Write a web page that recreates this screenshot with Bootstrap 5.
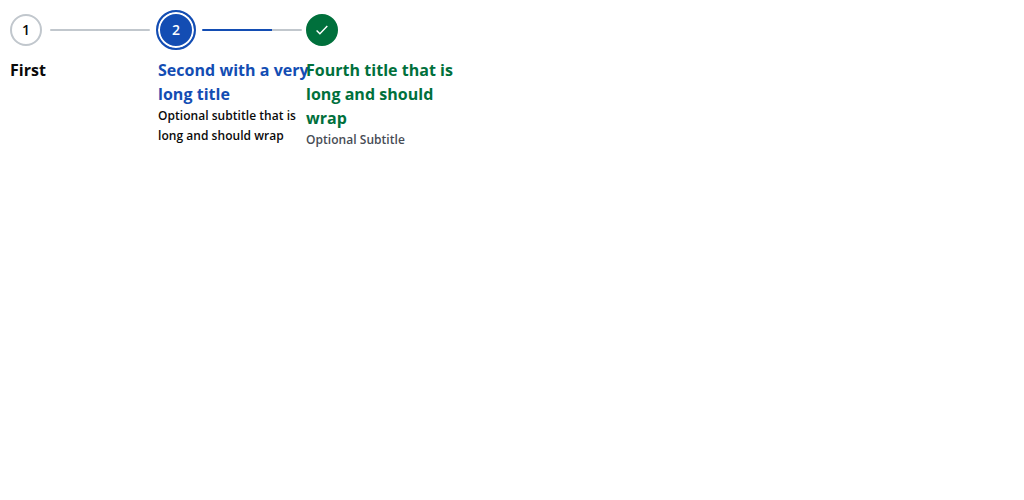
<!DOCTYPE html>
<html lang="en">
<head>
<meta charset="utf-8">
<title>Stepper</title>
<link href="https://cdn.jsdelivr.net/npm/bootstrap@5.3.0/dist/css/bootstrap.min.css" rel="stylesheet">
<style>
body{font-family:"Open Sans",sans-serif;color:#0a0a0a;background:#fff}
.stepper{padding:10px}
.step{width:148px;flex:none}
.step-head{height:40px}
.dot{width:32px;height:32px;flex:none;font-size:14px;font-weight:600;line-height:20px;border:2px solid #c1c7cd}
.line{width:100px;height:2px;margin-left:8px;flex:none;background:#c1c7cd;border-radius:1px}
.step-title{font-size:16px;line-height:24px;font-weight:700;margin-top:8px;letter-spacing:.03px}
.step-sub{font-size:12px;line-height:20px;font-weight:600;letter-spacing:.04px}
.current .dot{width:40px;height:40px;margin-left:-2px;color:#fff;background:#134db3;border-color:#134db3;box-shadow:inset 0 0 0 2px #fff}
.current .line{margin-left:6px;background:linear-gradient(90deg,#134db3 70%,#c1c7cd 70%)}
.current .step-title{color:#134db3;width:152px}
.done .dot{background:#00703c;border-color:#00703c}
.done .step-title{color:#00703c;width:149px}
.done .step-sub{color:#474c55}
</style>
</head>
<body>
<div class="stepper d-flex align-items-start">
<div class="step"><div class="step-head d-flex align-items-center"><span class="dot rounded-circle d-flex align-items-center justify-content-center">1</span><span class="line"></span></div><div class="step-title">First</div></div>
<div class="step current"><div class="step-head d-flex align-items-center"><span class="dot rounded-circle d-flex align-items-center justify-content-center">2</span><span class="line"></span></div><div class="step-title">Second with a very long title</div><div class="step-sub">Optional subtitle that is long and should wrap</div></div>
<div class="step done"><div class="step-head d-flex align-items-center"><span class="dot rounded-circle d-flex align-items-center justify-content-center"><svg width="16" height="16" viewBox="0 0 16 16" fill="none" stroke="#fff" stroke-width="1.4"><path d="m2.6 8.4 3.3 3.3 7.4-7.6"/></svg></span></div><div class="step-title">Fourth title that is long and should wrap</div><div class="step-sub">Optional Subtitle</div></div>
</div>
<script src="https://cdn.jsdelivr.net/npm/bootstrap@5.3.0/dist/js/bootstrap.bundle.min.js"></script>
</body>
</html>
